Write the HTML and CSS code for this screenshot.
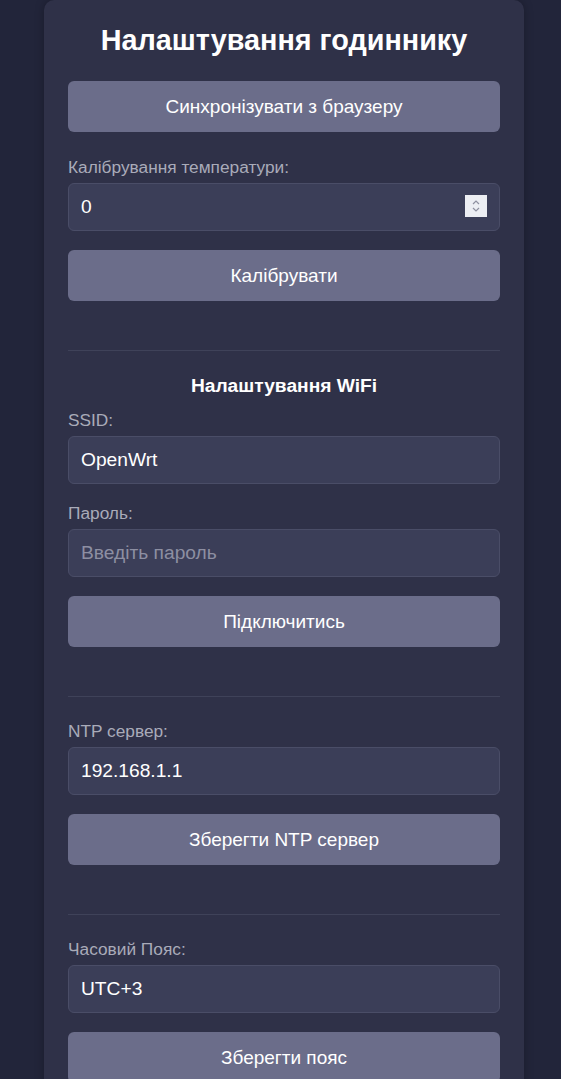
FILE: index.html
```html
<!DOCTYPE html>
<html lang="uk">
<head>
<meta charset="utf-8">
<title>Налаштування годиннику</title>
<link rel="stylesheet" href="styles.css">
</head>
<body>
<div class="card">
  <h1 class="title">Налаштування годиннику</h1>
  <button class="btn">Синхронізувати з браузеру</button>

  <label class="label" for="cal">Калібрування температури:</label>
  <div class="field-wrap">
    <input class="field field-number" id="cal" type="number" value="0">
    <span class="spinner" aria-hidden="true">
      <svg width="10" height="16" viewBox="0 0 10 16">
        <path d="M2 6 L5 3 L8 6" fill="none" stroke="#8e90a0" stroke-width="1.2"/>
        <path d="M2 10 L5 13 L8 10" fill="none" stroke="#8e90a0" stroke-width="1.2"/>
      </svg>
    </span>
  </div>
  <button class="btn">Калібрувати</button>

  <hr class="sep">

  <h2 class="subtitle">Налаштування WiFi</h2>
  <label class="label" for="ssid">SSID:</label>
  <input class="field" id="ssid" type="text" value="OpenWrt">
  <label class="label" for="pass">Пароль:</label>
  <input class="field" id="pass" type="password" placeholder="Введіть пароль">
  <button class="btn">Підключитись</button>

  <hr class="sep">

  <label class="label" for="ntp">NTP сервер:</label>
  <input class="field" id="ntp" type="text" value="192.168.1.1">
  <button class="btn">Зберегти NTP сервер</button>

  <hr class="sep">

  <label class="label" for="tz">Часовий Пояс:</label>
  <input class="field" id="tz" type="text" value="UTC+3">
  <button class="btn">Зберегти пояс</button>
</div>
</body>
</html>
```

FILE: styles.css
```css
html, body {
  margin: 0;
  padding: 0;
}
body {
  background: #22253a;
  font-family: "Liberation Sans", Arial, sans-serif;
  color: #ffffff;
}
.card {
  width: 432px;
  margin: 0 0 0 44px;
  padding: 24px 24px 40px;
  background: #2f3148;
  border-radius: 10px;
  box-shadow: 0 0 10px rgba(0, 0, 0, 0.25);
  display: flex;
  flex-direction: column;
  min-height: 1100px;
}
.title {
  margin: 0 0 24px;
  font-size: 28.8px;
  line-height: 33px;
  font-weight: bold;
  text-align: center;
}
.subtitle {
  margin: 0 0 13px;
  font-size: 19.2px;
  line-height: 22px;
  font-weight: bold;
  text-align: center;
}
.btn {
  display: block;
  width: 100%;
  height: 51px;
  border: none;
  border-radius: 6px;
  background: #6b6d8a;
  color: #ffffff;
  font-family: "Liberation Sans", Arial, sans-serif;
  font-size: 19px;
  margin: 0 0 25px;
  padding: 0;
}
.label {
  display: block;
  font-size: 17.3px;
  line-height: 20px;
  color: #a9abb9;
  margin: 0 0 6px;
}
.field-wrap {
  position: relative;
  margin: 0 0 19px;
}
.field {
  box-sizing: border-box;
  display: block;
  width: 100%;
  height: 48px;
  padding: 0 12px;
  border: 1px solid #4a4d67;
  border-radius: 6px;
  background: #3b3e58;
  color: #ffffff;
  font-family: "Liberation Sans", Arial, sans-serif;
  font-size: 19.2px;
  margin: 0 0 19px;
  outline: none;
}
.field-wrap .field {
  margin: 0;
}
.field-number {
  -moz-appearance: textfield;
}
.field-number::-webkit-inner-spin-button,
.field-number::-webkit-outer-spin-button {
  -webkit-appearance: none;
  margin: 0;
}
.field::placeholder {
  color: #8d8fa2;
}
.spinner {
  position: absolute;
  right: 13px;
  top: 12px;
  width: 22px;
  height: 22px;
  background: #eceef3;
  display: flex;
  align-items: center;
  justify-content: center;
}
.sep {
  width: 100%;
  border: none;
  border-top: 1px solid #3f4259;
  margin: 24px 0 24px;
  height: 0;
}
```
